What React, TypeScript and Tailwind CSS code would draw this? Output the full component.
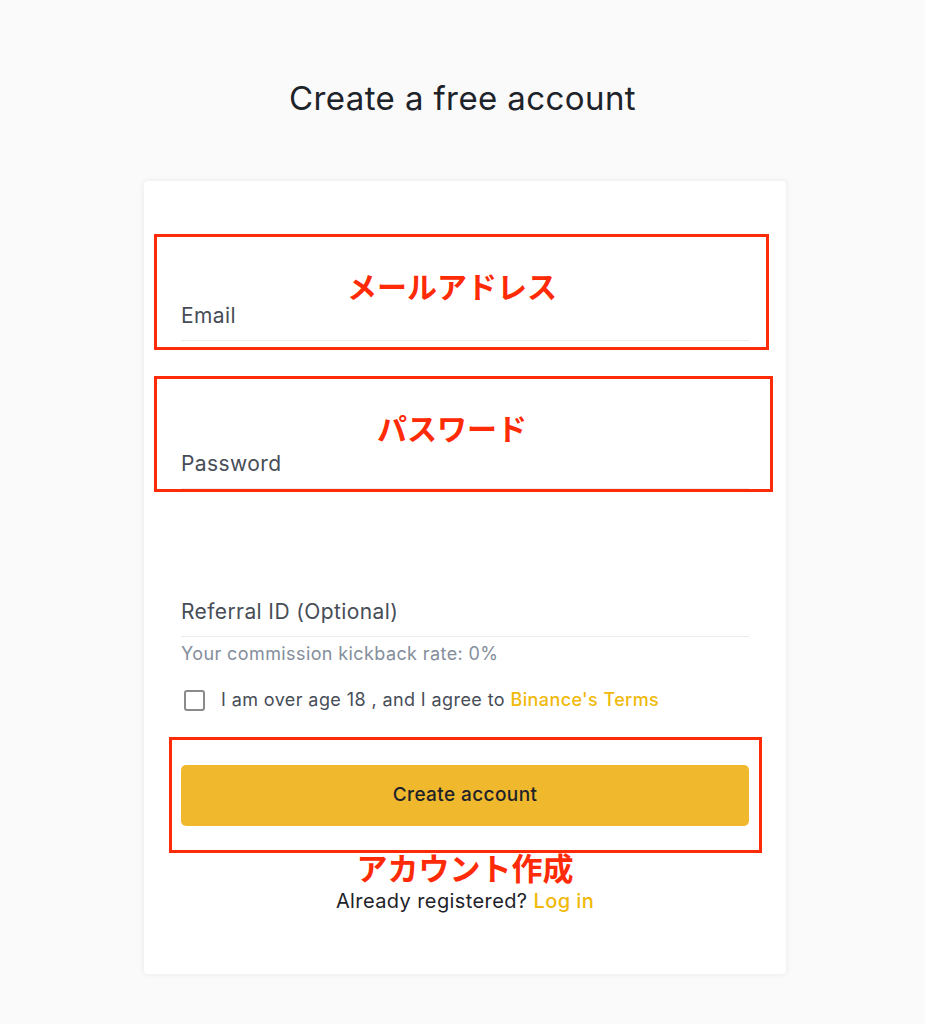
import React from 'react';

const jp = { fontFamily: '"Noto Sans CJK JP", "Noto Sans", sans-serif' };

const Field: React.FC<{ label: string; className?: string }> = ({ label, className = '' }) => (
  <div className={`border-b border-[#eaecef] pb-[10px] ${className}`}>
    <div className="text-[21px] leading-[28px] text-[#474d57]">{label}</div>
  </div>
);

const Note: React.FC<{ text: string }> = ({ text }) => (
  <div style={jp} className="mr-[26px] text-center text-[30px] font-bold leading-[34px] tracking-normal text-[#ff2a06]">
    {text}
  </div>
);

export default function App() {
  return (
    <div
      className="min-h-[1024px] bg-[#fafafa] pt-[78px] tracking-[0.025em]"
      style={{ fontFamily: 'Inter, "Open Sans", sans-serif' }}
    >
      <h1 className="text-center text-[33px] leading-[40px] text-[#1e2329]">Create a free account</h1>

      <div className="ml-[144px] mt-[63px] w-[642px] rounded-[4px] bg-white px-[37px] pb-[61px] pt-[53px] shadow-[0_0_6px_rgba(0,0,0,0.08)]">
        {/* Email */}
        <div className="-ml-[27px] -mr-[20px] border-[3px] border-[#ff2a06] pb-[6px] pl-[24px] pr-[17px] pt-[31px]">
          <Note text="メールアドレス" />
          <Field label="Email" />
        </div>

        {/* Password */}
        <div className="-ml-[27px] -mr-[24px] mt-[26px] border-[3px] border-[#ff2a06] pl-[24px] pr-[21px] pt-[31px]">
          <Note text="パスワード" />
          <Field label="Password" className="mt-[6px]" />
        </div>

        {/* Referral */}
        <div className="mt-[106px]">
          <Field label="Referral ID (Optional)" />
        </div>
        <div className="mt-[5px] text-[18px] leading-[24px] text-[#848e9c]">Your commission kickback rate: 0%</div>

        <div className="mt-[22px] flex items-center">
          <span className="ml-[3px] h-[21px] w-[21px] rounded-[3px] border-2 border-[#8a8a8a]" />
          <span className="ml-[16px] text-[18px] leading-[24px] text-[#474d57]">
            I am over age 18 , and I agree to{' '}
            <span className="font-medium text-[#f0b90b]">Binance's Terms</span>
          </span>
        </div>

        {/* Button */}
        <div className="-ml-[12px] -mr-[13px] mt-[25px] border-[3px] border-[#ff2a06] pb-[24px] pl-[9px] pr-[10px] pt-[25px]">
          <button className="flex h-[61px] w-full items-center justify-center rounded-[5px] bg-[#f0b82d] text-[19px] font-medium text-[#1e2329]">
            Create account
          </button>
        </div>

        <div style={jp} className="-mt-[2px] text-center text-[31px] font-bold leading-[32px] tracking-normal text-[#ff2a06]">
          アカウント作成
        </div>
        <div className="mt-[6px] text-center text-[20px] leading-[24px] text-[#1e2329]">
          Already registered? <span className="font-medium text-[#f0b90b]">Log in</span>
        </div>
      </div>
    </div>
  );
}
